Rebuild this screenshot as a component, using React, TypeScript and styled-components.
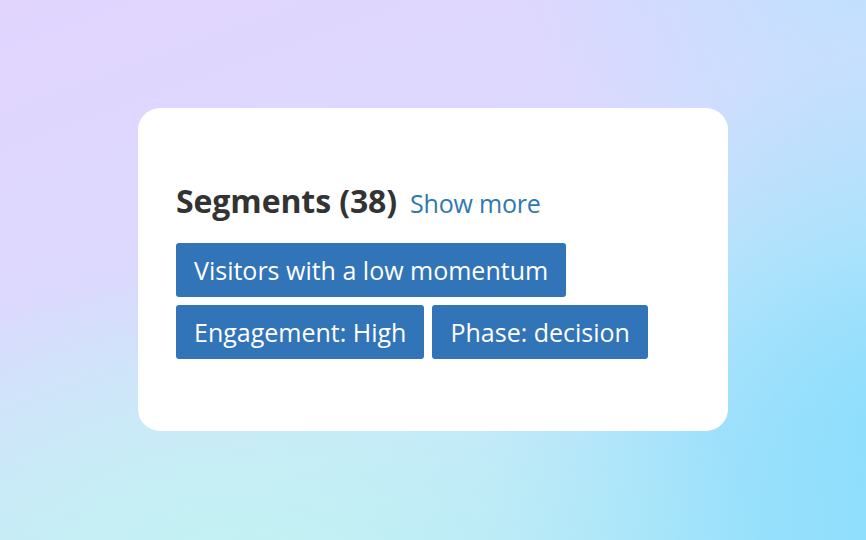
import React from "react";
import styled, { createGlobalStyle } from "styled-components";

const Global = createGlobalStyle`
  html, body { margin: 0; padding: 0; }
  body { font-family: "Open Sans", "Noto Sans", sans-serif; }
`;

const Stage = styled.div`
  width: 866px;
  height: 540px;
  box-sizing: border-box;
  padding: 108px 138px 0 138px;
  background:
    radial-gradient(ellipse 520px 300px at 28% 105%, rgba(196, 243, 242, 0.95), rgba(196, 243, 242, 0) 100%),
    radial-gradient(ellipse 420px 380px at 105% 80%, rgba(134, 221, 253, 0.9), rgba(134, 221, 253, 0) 100%),
    radial-gradient(ellipse 360px 260px at 102% -5%, rgba(188, 226, 254, 0.95), rgba(188, 226, 254, 0) 100%),
    linear-gradient(160deg, #e1d5fe 0%, #ddd8fe 35%, #c9e6fb 65%, #a2e3fb 100%);
`;

const Card = styled.section`
  width: 590px;
  height: 323px;
  box-sizing: border-box;
  background: #ffffff;
  border-radius: 22px;
  padding: 73px 38px 0 38px;
`;

const Heading = styled.h2`
  margin: 0 0 20px 0;
  display: flex;
  align-items: baseline;
  gap: 13px;
  font-size: 32px;
  line-height: 40px;
  font-weight: 700;
  color: #333333;
  letter-spacing: -0.1px;
`;

const ShowMore = styled.a`
  font-size: 25px;
  font-weight: 400;
  color: #2f78b0;
  text-decoration: none;
  letter-spacing: -0.2px;
`;

const Tags = styled.div`
  display: flex;
  flex-direction: column;
  align-items: flex-start;
  gap: 8px;
`;

const TagRow = styled.div`
  display: flex;
  gap: 8px;
`;

const Tag = styled.span`
  display: inline-flex;
  align-items: center;
  height: 54px;
  box-sizing: border-box;
  padding: 0 18px;
  background: #3174b7;
  color: #ffffff;
  border-radius: 3px;
  font-size: 25px;
  font-weight: 400;
  letter-spacing: 0;
`;

export default function App() {
  return (
    <>
      <Global />
      <Stage>
        <Card>
          <Heading>
            Segments (38)
            <ShowMore href="#">Show more</ShowMore>
          </Heading>
          <Tags>
            <TagRow>
              <Tag>Visitors with a low momentum</Tag>
            </TagRow>
            <TagRow>
              <Tag>Engagement: High</Tag>
              <Tag>Phase: decision</Tag>
            </TagRow>
          </Tags>
        </Card>
      </Stage>
    </>
  );
}
